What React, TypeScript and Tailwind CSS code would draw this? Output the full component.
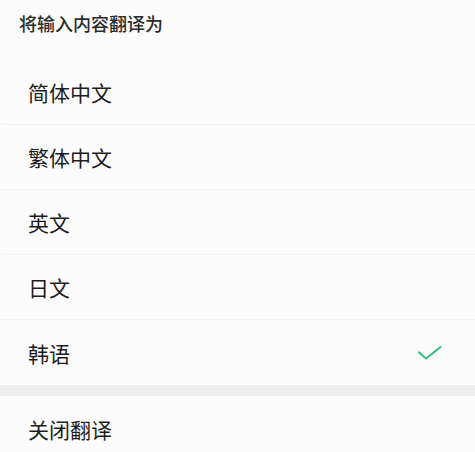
import React from "react";

const items = ["简体中文", "繁体中文", "英文", "日文", "韩语"];

export default function App() {
  return (
    <div
      className="w-[475px] h-[452px] overflow-hidden bg-[#fdfcfd] text-[#1c1c1c]"
      style={{ fontFamily: '"Noto Sans CJK SC", "Noto Sans", sans-serif' }}
    >
      <div className="h-[48px] pl-[19px] pt-[11px] text-[18px] leading-[24px] font-medium text-[#2a2a2a]">
        将输入内容翻译为
      </div>
      <div className="h-[12px]" />
      <div className="pl-[2px]">
        {items.map((t, i) => (
          <div
            key={t}
            className={`h-[65px] flex items-center justify-between pl-[26px] pr-[32px] ${
              i < items.length - 1 ? "border-b border-[#f3f1f3]" : ""
            }`}
          >
            <span className="text-[21px] leading-[28px]">{t}</span>
            {i === items.length - 1 && (
              <svg width="26" height="16" viewBox="0 0 26 16" fill="none">
                <path
                  d="M2 7.5 L9 13.5 L23.5 2"
                  stroke="#3cbf7c"
                  strokeWidth="2.2"
                  strokeLinecap="round"
                  strokeLinejoin="round"
                />
              </svg>
            )}
          </div>
        ))}
      </div>
      <div className="h-[11px] bg-[#eeedf0]" />
      <div className="pl-[28px] h-[65px] flex items-center">
        <span className="text-[21px] leading-[28px]">关闭翻译</span>
      </div>
    </div>
  );
}
